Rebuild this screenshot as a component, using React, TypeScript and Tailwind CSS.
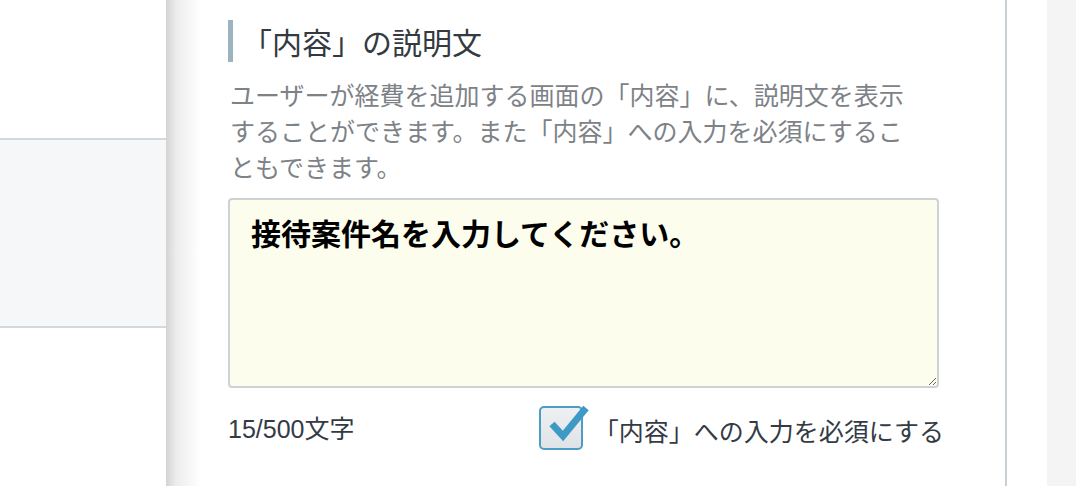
import React from "react";

const JP = "font-['Noto_Sans_CJK_JP','Noto_Sans',sans-serif]";

export default function App() {
  return (
    <div className="w-[1076px] h-[486px] flex overflow-hidden bg-white">
      {/* left list */}
      <div className="w-[166px] shrink-0 flex flex-col">
        <div className="h-[138px] bg-white" />
        <div className="h-[190px] bg-[#f5f7f9] border-y-2 border-[#d0d9dd]" />
        <div className="flex-1 bg-white" />
      </div>

      {/* main panel */}
      <div className="w-[841px] shrink-0 border-r-2 border-[#c9d1d5] bg-[linear-gradient(to_right,#d4d4d4_0px,#ececec_10px,#ffffff_34px)] pl-[62px] pt-[20px]">
        <div className="flex items-center gap-[9px]">
          <div className="w-[5px] h-[42px] bg-[#9bb4bf]" />
          <h2 className={`${JP} text-[30px] leading-[42px] text-[#333a40] font-normal`}>「内容」の説明文</h2>
        </div>

        <p className={`${JP} mt-[14px] pl-[2px] w-[692px] text-[25px] leading-[36px] text-[#7d8287]`}>
          ユーザーが経費を追加する画面の「内容」に、説明文を表示することができます。また「内容」への入力を必須にすることもできます。
        </p>

        <textarea
          readOnly
          defaultValue="接待案件名を入力してください。"
          className={`${JP} mt-[14px] block w-[711px] h-[190px] border-2 border-[#cdd3d5] rounded-[4px] bg-[#fdfdee] px-[21px] pt-[10px] text-[30px] leading-[44px] font-bold text-black outline-none`}
        />

        <div className="mt-[18px] flex items-center w-[716px]">
          <span className={`font-['Liberation_Sans','Noto_Sans_CJK_JP',sans-serif] text-[25px] text-[#333b44] mt-[4px]`}>15/500文字</span>
          <label className="ml-auto flex items-center">
            <span className="relative w-[44px] h-[44px] rounded-[5px] border-2 border-[#4a9ec6] bg-[linear-gradient(to_bottom,#eef0f2,#e0e3e6)]">
              <svg className="absolute left-[0px] top-[-6px]" width="54" height="48" viewBox="0 0 54 48">
                <path d="M11 22 L22 34 L45 6" fill="none" stroke="#3c9ac4" strokeWidth="7" strokeLinejoin="miter" strokeLinecap="butt" />
              </svg>
            </span>
            <span className={`${JP} ml-[11px] text-[25px] text-[#333b44] mt-[6px]`}>「内容」への入力を必須にする</span>
          </label>
        </div>
      </div>

      <div className="w-[40px] shrink-0 bg-white" />
      <div className="flex-1 bg-[#f4f4f4]" />
    </div>
  );
}
